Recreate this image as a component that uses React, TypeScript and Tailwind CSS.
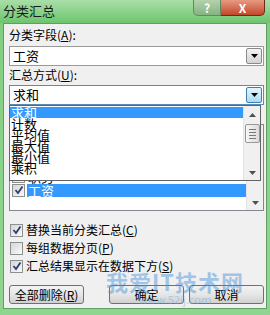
import React from "react";

const FONT = { fontFamily: '"Noto Sans CJK SC", "Liberation Sans", sans-serif' };

function Tri({ up = false, color = "#000" }: { up?: boolean; color?: string }) {
  return (
    <svg width="7" height="4" viewBox="0 0 7 4">
      <path d={up ? "M0 4 L3.5 0 L7 4 Z" : "M0 0 L7 0 L3.5 4 Z"} fill={color} />
    </svg>
  );
}

function Checkbox({ checked }: { checked?: boolean }) {
  return (
    <span className="flex h-[13px] w-[13px] shrink-0 items-center justify-center border border-[#8e8f8f] bg-linear-to-br from-[#d6d6d6] to-[#fafafa]">
      {checked && (
        <svg width="10" height="10" viewBox="0 0 10 10">
          <path d="M1.5 5 L4 8 L8.5 1.5" fill="none" stroke="#2b3f6c" strokeWidth="1.8" />
        </svg>
      )}
    </span>
  );
}

function Label({ text, k }: { text: string; k: string }) {
  return (
    <div className="h-[14px] text-[12px] leading-[14px] text-black">
      {text}(<u>{k}</u>):
    </div>
  );
}

function Combo({ value, active }: { value: string; active?: boolean }) {
  return (
    <div
      className={`flex h-[20px] items-center border bg-white ${
        active ? "border-[#5a8bb8]" : "border-[#9a9a9a]"
      }`}
    >
      <span className="flex-1 pl-[3px] text-[13px] leading-[18px]">{value}</span>
      <span
        className={`mr-[1px] flex h-[16px] w-[16px] items-center justify-center rounded-[2px] border ${
          active
            ? "border-[#3c7fb1] bg-linear-to-b from-[#e3f4fc] to-[#a9dbf6]"
            : "border-[#8a8a8a] bg-linear-to-b from-[#f4f4f4] to-[#d4d4d4]"
        }`}
      >
        <Tri />
      </span>
    </div>
  );
}

function ScrollBar({ thumb = true }: { thumb?: boolean }) {
  return (
    <div className="flex w-[17px] shrink-0 flex-col items-center border-l border-[#e3e3e3] bg-[#f0f0f0]">
      <div className="flex h-[17px] items-center justify-center">
        <Tri up color="#505050" />
      </div>
      {thumb && (
        <div className="mt-[1px] flex h-[19px] w-[15px] flex-col items-center justify-center gap-[2px] rounded-[2px] border border-[#979797] bg-linear-to-r from-[#f6f6f6] to-[#dcdcdc]">
          <span className="h-px w-[7px] bg-[#7a7a7a]" />
          <span className="h-px w-[7px] bg-[#7a7a7a]" />
          <span className="h-px w-[7px] bg-[#7a7a7a]" />
          <span className="h-px w-[7px] bg-[#7a7a7a]" />
        </div>
      )}
      <div className="flex-1" />
      <div className="flex h-[14px] items-center justify-center">
        <Tri color="#505050" />
      </div>
    </div>
  );
}

function Button({ children }: { children: React.ReactNode }) {
  return (
    <div className="flex h-[19px] w-[75px] items-center justify-center rounded-[3px] border border-[#707070] bg-linear-to-b from-[#f3f3f3] via-[#e6e6e6] to-[#d0d0d0] text-[12px]">
      {children}
    </div>
  );
}

const methods = ["求和", "计数", "平均值", "最大值", "最小值", "乘积"];
const fields = ["序号", "姓名", "部门", "职务", "工资"];

export default function App() {
  return (
    <div
      className="relative h-[315px] w-[270px] overflow-hidden bg-linear-to-b from-[#7fcd7f] via-[#8ad38a] to-[#8fd58f]"
      style={FONT}
    >
      {/* title bar */}
      <div className="flex h-[23px] items-start bg-linear-to-b from-[#a8dfa8] to-[#6dc56d]">
        <span className="pl-[3px] pt-[3px] text-[13px] leading-[16px] text-[#1a1a1a]">分类汇总</span>
        <div className="flex-1" />
        <div className="flex h-[16px] w-[28px] items-center justify-center rounded-bl-[5px] border border-t-0 border-[#5f8a5f] bg-linear-to-b from-[#b3d2ad] to-[#86b381] text-[12px] font-bold leading-[14px] text-white">
          ?
        </div>
        <div className="mr-[5px] flex h-[16px] w-[44px] items-center justify-center rounded-br-[5px] border border-l-0 border-t-0 border-[#6b2a1c] bg-linear-to-b from-[#e59a80] to-[#c2442a] text-[12px] font-bold leading-[14px] text-white">
          X
        </div>
      </div>

      {/* client area */}
      <div className="relative mx-[3px] h-[286px] border border-[#5f9f5f] bg-[#f0f0f0] pl-[5px] pr-[2px] pt-[4px]">
        <Label text="分类字段" k="A" />
        <div className="mt-[4px]">
          <Combo value="工资" />
        </div>
        <div className="mt-[2px]">
          <Label text="汇总方式" k="U" />
        </div>
        <div className="mt-[3px]">
          <Combo value="求和" active />
        </div>

        <div className="mt-[3px]">
          <Label text="选定汇总项" k="D" />
        </div>
        <div className="mt-[2px] flex h-[87px] border border-[#828790] bg-white">
          <div className="flex-1 pt-[2px]">
            {fields.map((f) => (
              <div key={f} className="flex h-[14px] items-center gap-[2px] pl-[2px]">
                <Checkbox checked={f === "工资"} />
                <span
                  className={`flex-1 pl-[1px] text-[13px] leading-[13px] ${
                    f === "工资" ? "bg-[#3399ff] text-white" : ""
                  }`}
                >
                  {f}
                </span>
              </div>
            ))}
          </div>
          <ScrollBar thumb={false} />
        </div>

        {/* dropdown list (open) */}
        <div className="absolute left-[5px] top-[81px] z-10 flex h-[76px] w-[252px] border border-[#646464] bg-white">
          <div className="flex-1 pt-[1px]">
            {methods.map((m, i) => (
              <div
                key={m}
                className={`h-[11px] pl-[1px] text-[13px] leading-[11px] ${
                  i === 0 ? "bg-[#3399ff] text-white" : "text-black"
                }`}
              >
                {m}
              </div>
            ))}
          </div>
          <ScrollBar />
        </div>

        <div className="mt-[12px] flex flex-col gap-[4px]">
          {[
            { t: "替换当前分类汇总", k: "C", c: true },
            { t: "每组数据分页", k: "P", c: false },
            { t: "汇总结果显示在数据下方", k: "S", c: true },
          ].map((o) => (
            <div key={o.k} className="flex h-[14px] items-center gap-[3px] pl-[1px]">
              <Checkbox checked={o.c} />
              <span className="text-[12px] leading-[14px]">
                {o.t}(<u>{o.k}</u>)
              </span>
            </div>
          ))}
        </div>

        <div className="mt-[12px] flex items-center">
          <Button>
            全部删除(<u>R</u>)
          </Button>
          <div className="flex-1" />
          <Button>确定</Button>
          <div className="w-[5px]" />
          <Button>取消</Button>
        </div>

        {/* watermark */}
        <div className="pointer-events-none absolute left-[102px] top-[245px] flex flex-col items-center opacity-45">
          <span className="text-[22px] font-bold leading-[24px] tracking-[1px] text-[#3f8fd8]">我爱IT技术网</span>
          <span className="text-[11px] leading-[12px] text-[#6aaee6]">www.52ij.com</span>
        </div>
      </div>
    </div>
  );
}
